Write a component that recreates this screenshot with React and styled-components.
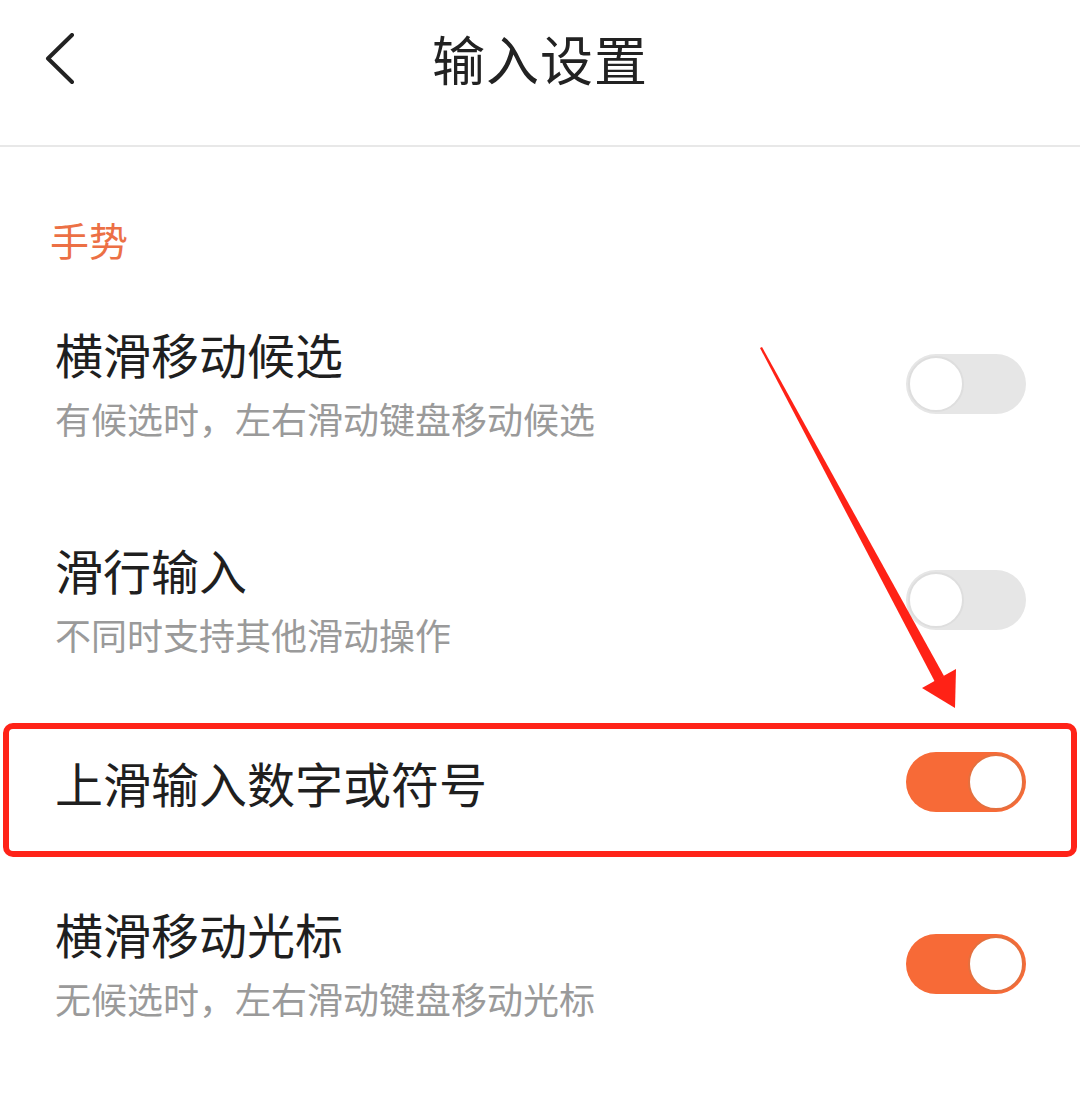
import React from "react";
import styled, { createGlobalStyle } from "styled-components";

const GlobalStyle = createGlobalStyle`
  html, body {
    margin: 0;
    padding: 0;
    background: #ffffff;
  }
  body {
    font-family: "Noto Sans CJK SC", "Noto Sans", sans-serif;
    -webkit-font-smoothing: antialiased;
  }
`;

const Page = styled.div`
  position: relative;
  width: 1080px;
  min-height: 1102px;
  background: #ffffff;
  overflow: hidden;
`;

const Header = styled.header`
  display: grid;
  grid-template-columns: 1fr auto 1fr;
  align-items: center;
  height: 117px;
  padding-bottom: 28px;
  border-bottom: 2px solid #e8e8e8;
`;

const BackButton = styled.button`
  justify-self: start;
  display: flex;
  align-items: center;
  margin-left: 44px;
  padding: 0;
  border: none;
  background: transparent;
  cursor: pointer;
`;

const Title = styled.h1`
  margin: 0;
  font-size: 53px;
  font-weight: 400;
  color: #222222;
  letter-spacing: 1px;
  line-height: 1;
`;

const SectionLabel = styled.div`
  padding: 69px 0 0 50px;
  height: 60px;
  font-size: 39px;
  line-height: 46px;
  color: #ec7045;
`;

const Row = styled.div`
  position: relative;
  display: flex;
  align-items: center;
  justify-content: space-between;
  height: ${(p) => p.$height}px;
  padding: 0 54px 0 55px;
`;

const TextBlock = styled.div`
  display: flex;
  flex-direction: column;
  gap: ${(p) => (p.$twoLine ? "14px" : "0")};
  padding-bottom: ${(p) => (p.$twoLine ? "4px" : "0")};
`;

const RowTitle = styled.div`
  font-size: 48px;
  line-height: 58px;
  color: #1f1f1f;
`;

const RowSub = styled.div`
  font-size: 36px;
  line-height: 44px;
  color: #9a9a9a;
`;

const Highlight = styled.div`
  position: absolute;
  top: 15px;
  bottom: -1px;
  left: 3px;
  right: 3px;
  border: 6px solid #ff2318;
  border-radius: 10px;
  pointer-events: none;
`;

const Track = styled.div`
  position: relative;
  flex: none;
  width: 120px;
  height: 60px;
  border-radius: 30px;
  background: ${(p) => (p.$on ? "#f76a37" : "#e6e6e6")};
`;

const Knob = styled.div`
  position: absolute;
  top: 2px;
  left: ${(p) => (p.$on ? "62px" : "2px")};
  width: 52px;
  height: 52px;
  border-radius: 50%;
  background: #ffffff;
  border: 2px solid ${(p) => (p.$on ? "#e4703f" : "#dedede")};
`;

const Overlay = styled.svg`
  position: absolute;
  left: 0;
  top: 0;
  width: 1080px;
  height: 1102px;
  pointer-events: none;
`;

function Toggle({ on }) {
  return (
    <Track $on={on}>
      <Knob $on={on} />
    </Track>
  );
}

const rows = [
  { title: "横滑移动候选", sub: "有候选时，左右滑动键盘移动候选", on: false, h: 216 },
  { title: "滑行输入", sub: "不同时支持其他滑动操作", on: false, h: 216 },
  { title: "上滑输入数字或符号", on: true, h: 148, highlight: true },
  { title: "横滑移动光标", sub: "无候选时，左右滑动键盘移动光标", on: true, h: 216 },
];

export default function App() {
  return (
    <>
      <GlobalStyle />
      <Page>
        <Header>
          <BackButton aria-label="返回">
            <svg width="32" height="52" viewBox="0 0 32 52">
              <polyline
                points="28,2 4,25.5 28,49"
                fill="none"
                stroke="#222"
                strokeWidth="4"
                strokeLinecap="round"
                strokeLinejoin="round"
              />
            </svg>
          </BackButton>
          <Title>输入设置</Title>
          <div />
        </Header>
        <SectionLabel>手势</SectionLabel>
        {rows.map((r) => (
          <Row key={r.title} $height={r.h}>
            <TextBlock $twoLine={!!r.sub}>
              <RowTitle>{r.title}</RowTitle>
              {r.sub && <RowSub>{r.sub}</RowSub>}
            </TextBlock>
            <Toggle on={r.on} />
            {r.highlight && <Highlight />}
          </Row>
        ))}
        <Overlay viewBox="0 0 1080 1102">
          <polygon points="760,348 762,347 944,676 935,682" fill="#ff2216" />
          <polygon points="922,688 956,669 955,708" fill="#ff2216" />
        </Overlay>
      </Page>
    </>
  );
}
